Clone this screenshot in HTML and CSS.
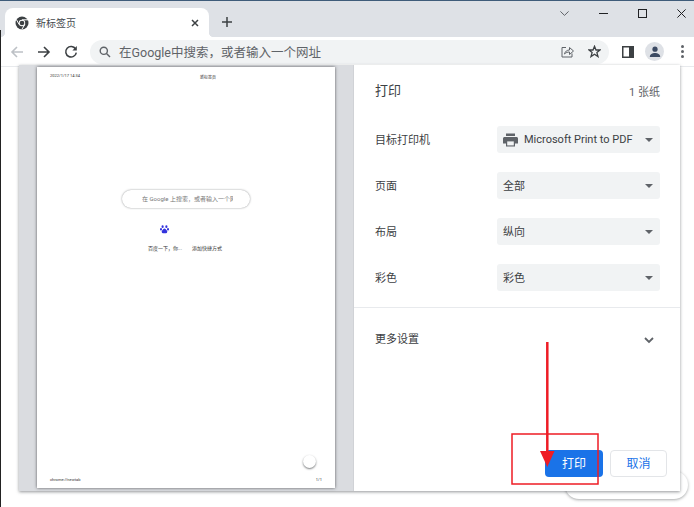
FILE: index.html
```html
<!DOCTYPE html>
<html lang="zh-CN">
<head>
    <meta charset="UTF-8">
    <meta name="viewport" content="width=device-width, initial-scale=1.0">
    <link rel="stylesheet" href="styles.css">
    <title>新标签页</title>
</head>
<body>

<div class="window">
    <div class="tabstrip">
        <div class="tab">
            <svg class="favicon" width="14" height="14" viewBox="0 0 14 14">
                <circle cx="7" cy="7" r="6.5" fill="#3c4043"/>
                <circle cx="7" cy="7" r="3.2" fill="#fff"/>
                <circle cx="7" cy="7" r="2.3" fill="#3c4043"/>
                <path d="M7 3.8H13M4.2 8.6L1.4 3.6M9.8 8.6L6.8 13.4" stroke="#fff" stroke-width="1"/>
            </svg>
            <span class="tab-title">新标签页</span>
            <svg class="tab-close" width="8" height="8" viewBox="0 0 8 8">
                <path d="M1 1L7 7M7 1L1 7" stroke="#3c4043" stroke-width="1.5"/>
            </svg>
        </div>
        <svg class="new-tab" width="12" height="12" viewBox="0 0 12 12">
            <path d="M6 1V11M1 6H11" stroke="#3c4043" stroke-width="1.5"/>
        </svg>
        <div class="window-controls">
            <svg width="9" height="5" viewBox="0 0 9 5"><path d="M0.4 0.4L4.5 4.4L8.6 0.4" fill="none" stroke="#5f6368" stroke-width="1"/></svg>
            <svg width="9" height="9" viewBox="0 0 9 9"><path d="M0 4.5H9" stroke="#202124" stroke-width="1"/></svg>
            <svg width="9" height="9" viewBox="0 0 9 9"><rect x="0.5" y="0.5" width="8" height="8" fill="none" stroke="#202124" stroke-width="1"/></svg>
            <svg width="9" height="9" viewBox="0 0 9 9"><path d="M0.4 0.4L8.6 8.6M8.6 0.4L0.4 8.6" stroke="#202124" stroke-width="1"/></svg>
        </div>
    </div>

    <div class="toolbar">
        <svg class="nav-icon" width="14" height="14" viewBox="0 0 14 14"><path d="M13 7H2M7 2L2 7L7 12" fill="none" stroke="#bdc1c6" stroke-width="1.6"/></svg>
        <svg class="nav-icon" width="14" height="14" viewBox="0 0 14 14"><path d="M1 7H12M7 2L12 7L7 12" fill="none" stroke="#3c4043" stroke-width="1.6"/></svg>
        <svg class="nav-icon" width="14" height="14" viewBox="0 0 14 14"><path d="M11.6 4A5.3 5.3 0 1 0 12.3 7.6" fill="none" stroke="#3c4043" stroke-width="1.5"/><path d="M12.8 1V5.4H8.4Z" fill="#3c4043"/></svg>
        <div class="omnibox">
            <svg width="12" height="12" viewBox="0 0 12 12"><circle cx="4.8" cy="4.8" r="3.6" fill="none" stroke="#5f6368" stroke-width="1.4"/><path d="M7.5 7.5L11 11" stroke="#5f6368" stroke-width="1.4"/></svg>
            <span class="omnibox-text">在Google中搜索，或者输入一个网址</span>
            <svg class="omnibox-share" width="13" height="12" viewBox="0 0 13 12"><path d="M5 1.5H1V11H11V7.5" fill="none" stroke="#5f6368" stroke-width="1"/><path d="M3.5 8C4 5.5 6 4 8.5 4V1.5L12.5 5L8.5 8.5V6C6.5 6 5 6.5 3.5 8Z" fill="none" stroke="#5f6368" stroke-width="1"/></svg>
            <svg class="omnibox-star" width="13" height="13" viewBox="0 0 13 13"><path d="M6.5 1.3L8 5H12L8.9 7.6L10 11.6L6.5 9.3L3 11.6L4.1 7.6L1 5H5Z" fill="none" stroke="#3c4043" stroke-width="1.3"/></svg>
        </div>
        <svg class="side-panel" width="12" height="12" viewBox="0 0 12 12"><rect x="0.75" y="0.75" width="10.5" height="10.5" fill="#fff" stroke="#3c4043" stroke-width="1.5"/><rect x="7" y="1" width="4" height="10" fill="#3c4043"/></svg>
        <div class="avatar">
            <svg width="12" height="12" viewBox="0 0 12 12"><circle cx="6" cy="3.2" r="2.6" fill="#3c4a63"/><path d="M0.8 11C0.8 8 3.5 7 6 7S11.2 8 11.2 11Z" fill="#3c4a63"/></svg>
        </div>
        <div class="menu-dots"><i></i><i></i><i></i></div>
    </div>

    <div class="customize-chip"></div>

    <div class="print-dialog">
        <div class="preview">
            <div class="sheet">
                <div class="sheet-header">
                    <span>2022/1/17 14:34</span>
                    <span class="sheet-title">新标签页</span>
                </div>
                <div class="sheet-search"><span>在 Google 上搜索，或者输入一个网</span></div>
                <svg class="sheet-paw" width="9" height="9" viewBox="0 0 10 10">
                    <ellipse cx="2.9" cy="1.9" rx="1.2" ry="1.5" fill="#3333dd"/>
                    <ellipse cx="7.1" cy="1.9" rx="1.2" ry="1.5" fill="#3333dd"/>
                    <ellipse cx="1.1" cy="4.8" rx="1.1" ry="1.4" fill="#3333dd"/>
                    <ellipse cx="8.9" cy="4.8" rx="1.1" ry="1.4" fill="#3333dd"/>
                    <path d="M5 4C3.8 4 3.4 5.4 2.4 6.2C1.4 7 1.8 9.4 3.6 9.2C4.4 9 5.6 9 6.4 9.2C8.2 9.4 8.6 7 7.6 6.2C6.6 5.4 6.2 4 5 4Z" fill="#3333dd"/>
                </svg>
                <div class="sheet-links">
                    <span>百度一下，你...</span>
                    <span>添加快捷方式</span>
                </div>
                <div class="sheet-footer">
                    <span>chrome://newtab</span>
                    <span>1/1</span>
                </div>
                <div class="sheet-fab"></div>
            </div>
        </div>

        <div class="sidebar">
            <div class="sidebar-header">
                <h1>打印</h1>
                <span class="sheet-count">1 张纸</span>
            </div>
            <div class="settings">
                <div class="setting-row">
                    <span class="setting-label">目标打印机</span>
                    <div class="select">
                        <svg class="select-printer" width="15" height="14" viewBox="0 0 15 14"><path d="M3 0.5H12V3H3ZM1.5 4H13.5C14.3 4 15 4.7 15 5.5V10.5H12V13.5H3V10.5H0V5.5C0 4.7 0.7 4 1.5 4Z" fill="#5f6368"/><rect x="4.2" y="8.4" width="6.6" height="4" fill="#f1f3f4"/></svg>
                        <span>Microsoft Print to PDF</span>
                    </div>
                </div>
                <div class="setting-row">
                    <span class="setting-label">页面</span>
                    <div class="select"><span class="select-cjk">全部</span></div>
                </div>
                <div class="setting-row">
                    <span class="setting-label">布局</span>
                    <div class="select"><span class="select-cjk">纵向</span></div>
                </div>
                <div class="setting-row">
                    <span class="setting-label">彩色</span>
                    <div class="select"><span class="select-cjk">彩色</span></div>
                </div>
            </div>
            <div class="more-settings">
                <span>更多设置</span>
                <svg width="10" height="7" viewBox="0 0 10 7"><path d="M1 1L5 5L9 1" fill="none" stroke="#5f6368" stroke-width="1.8"/></svg>
            </div>
            <div class="actions">
                <button class="btn btn-primary">打印</button>
                <button class="btn btn-cancel">取消</button>
            </div>
        </div>
    </div>

    <!-- red marks drawn on top of the screenshot -->
    <svg class="annotation" width="694" height="507" viewBox="0 0 694 507">
        <rect x="512" y="434" width="86" height="50" fill="none" stroke="#ee1c25" stroke-width="1.5"/>
        <path d="M547.3 342V455" stroke="#ee1c25" stroke-width="2.5"/>
        <path d="M540 451H554.5L547.3 467Z" fill="#ee1c25"/>
    </svg>
</div>

</body>
</html>
```

FILE: styles.css
```css
* {
    box-sizing: border-box;
}

body {
    margin: 0;
    background: #fff;
    font-family: Roboto, "Noto Sans CJK SC", sans-serif;
    color: #3c4043;
}

.window {
    position: relative;
    width: 694px;
    height: 507px;
    overflow: hidden;
    border-top: 1px solid #3f5c7a;
    padding-left: 1px;
}

/* black edge of the window behind, only below the tab strip */
.window::before {
    content: "";
    position: absolute;
    left: 0;
    top: 29px;
    bottom: 0;
    width: 1px;
    background: #222;
}

/* tab strip */
.tabstrip {
    display: flex;
    align-items: flex-end;
    height: 36px;
    margin-left: -1px;
    padding-left: 5px;
    background: #dee1e6;
}

.tab {
    position: relative;
    display: flex;
    align-items: center;
    width: 204px;
    height: 29px;
    padding: 0 10px;
    background: #fff;
    border-radius: 8px 8px 0 0;
}

.tab::before,
.tab::after {
    content: "";
    position: absolute;
    bottom: 0;
    width: 5px;
    height: 5px;
}

.tab::before {
    left: -5px;
    background: radial-gradient(circle at 0 0, transparent 5px, #fff 5.5px);
}

.tab::after {
    right: -5px;
    background: radial-gradient(circle at 100% 0, transparent 5px, #fff 5.5px);
}

.favicon {
    flex: none;
}

.tab-title {
    margin-left: 7px;
    font-size: 10px;
    color: #45494e;
}

.tab-close {
    margin-left: auto;
}

.new-tab {
    margin: 0 0 9px 12px;
}

.window-controls {
    display: flex;
    align-items: center;
    align-self: flex-start;
    gap: 30px;
    height: 24px;
    margin-left: auto;
    padding-right: 8px;
}

/* toolbar */
.toolbar {
    display: flex;
    align-items: center;
    height: 30px;
    padding-left: 9px;
    background: #fff;
    border-bottom: 1px solid #e8eaed;
}

.nav-icon {
    flex: none;
    margin-right: 13px;
}

.omnibox {
    display: flex;
    align-items: center;
    width: 519px;
    height: 24px;
    margin-left: -1px;
    padding: 0 8px 0 9px;
    background: #f1f3f4;
    border-radius: 12px;
}

.omnibox-text {
    margin-left: 8px;
    font-size: 12.5px;
    color: #5f6368;
}

.omnibox-share {
    margin-left: auto;
}

.omnibox-star {
    margin-left: 14px;
}

.side-panel {
    flex: none;
    margin-left: 13px;
}

.avatar {
    display: flex;
    align-items: center;
    justify-content: center;
    flex: none;
    width: 19px;
    height: 19px;
    margin-left: 11px;
    background: #dee1e6;
    border-radius: 50%;
}

.menu-dots {
    display: flex;
    flex-direction: column;
    gap: 2px;
    margin-left: 17px;
}

.menu-dots i {
    display: block;
    width: 3px;
    height: 3px;
    background: #5f6368;
    border-radius: 50%;
}

/* bit of the new tab page left showing behind the dialog */
.customize-chip {
    position: absolute;
    left: 565px;
    top: 470px;
    width: 123px;
    height: 28px;
    background: #fff;
    border-radius: 14px;
    box-shadow: 0 1px 3px rgba(60, 64, 67, 0.45);
}

/* print dialog */
.print-dialog {
    position: absolute;
    left: 19px;
    top: 64px;
    display: flex;
    width: 661px;
    height: 426px;
    background: #fff;
    box-shadow: 0 1px 3px rgba(60, 64, 67, 0.55);
}

.preview {
    flex: none;
    width: 335px;
    padding: 2px 18px 3px;
    background: #dadce0;
    border-right: 1px solid #d0d2d6;
}

.sheet {
    position: relative;
    display: flex;
    flex-direction: column;
    height: 421px;
    padding: 6px 13px 6px;
    background: #fff;
    box-shadow: 0 0 3px rgba(32, 33, 36, 0.7);
    font-size: 4px;
    color: #333;
}

.sheet-header {
    position: relative;
    height: 8px;
}

.sheet-title {
    position: absolute;
    left: 150px;
    top: 1px;
}

.sheet-search {
    align-self: flex-start;
    width: 128px;
    height: 18px;
    margin: 109px 0 0 72px;
    padding-left: 20px;
    background: #fff;
    border-radius: 9px;
    box-shadow: 0 0 2px rgba(60, 64, 67, 0.6);
    font-size: 6px;
    line-height: 18px;
    color: #777;
}

.sheet-search span {
    display: block;
    width: 91px;
    overflow: hidden;
    white-space: nowrap;
}

.sheet-paw {
    margin: 17px 0 0 110px;
}

.sheet-links {
    display: flex;
    gap: 10px;
    margin: 10px 0 0 98px;
    font-size: 5px;
}

.sheet-footer {
    display: flex;
    justify-content: space-between;
    margin-top: auto;
}

.sheet-fab {
    position: absolute;
    left: 266px;
    top: 388px;
    width: 13px;
    height: 13px;
    background: #fff;
    border-radius: 50%;
    box-shadow: 0 1px 2px rgba(60, 64, 67, 0.7);
}

.sidebar {
    display: flex;
    flex-direction: column;
    flex: 1;
}

.sidebar-header {
    display: flex;
    align-items: center;
    justify-content: space-between;
    padding: 17px 20px 0 21px;
}

.sidebar-header h1 {
    margin: 0;
    font-size: 13px;
    font-weight: 400;
    line-height: 18px;
}

.sheet-count {
    font-size: 11px;
    color: #5f6368;
}

.settings {
    display: flex;
    flex-direction: column;
    gap: 19px;
    padding: 26px 20px 16px 21px;
    border-bottom: 1px solid #e8eaed;
}

.setting-row {
    display: flex;
    align-items: center;
    justify-content: space-between;
    font-size: 11px;
}

/* the CJK face sits a little low next to Roboto */
.setting-label,
.select-cjk {
    padding-bottom: 2px;
}

.select {
    position: relative;
    display: flex;
    align-items: center;
    width: 163px;
    height: 27px;
    padding-left: 6px;
    background: #f1f3f4;
    border-radius: 3px;
    font-size: 11px;
}

.select::after {
    content: "";
    position: absolute;
    right: 7px;
    top: 12px;
    border-top: 4px solid #5f6368;
    border-left: 4px solid transparent;
    border-right: 4px solid transparent;
}

.select-printer {
    margin: 0 6px 0 0;
}

.more-settings {
    display: flex;
    align-items: center;
    justify-content: space-between;
    padding: 23px 26px 0 21px;
    font-size: 11px;
    line-height: 18px;
}

.actions {
    display: flex;
    justify-content: flex-end;
    gap: 7px;
    margin-top: auto;
    padding: 0 13px 14px 0;
}

.btn {
    height: 27px;
    padding: 0 0 2px;
    border-radius: 4px;
    font: inherit;
    font-size: 12px;
}

.btn-primary {
    width: 58px;
    background: #1a73e8;
    border: 0;
    color: #fff;
}

.btn-cancel {
    width: 57px;
    background: #fff;
    border: 1px solid #e3e5e8;
    color: #1a73e8;
}

.annotation {
    position: absolute;
    left: 0;
    top: -1px;
    pointer-events: none;
}
```
